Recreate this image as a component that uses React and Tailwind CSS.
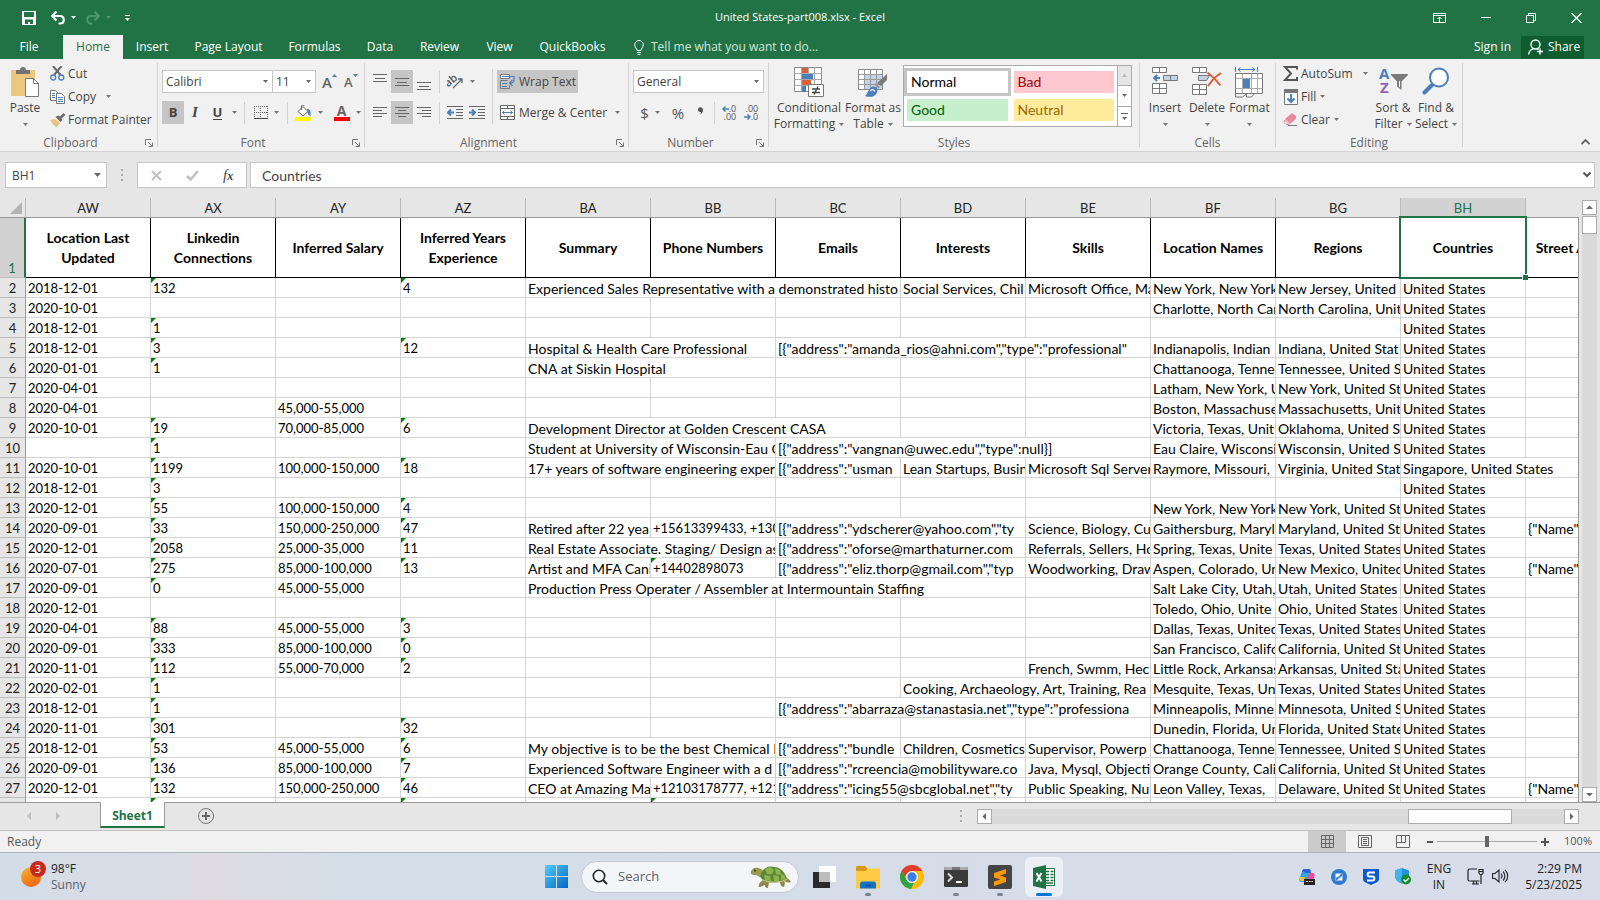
import React from 'react';
import clsx from 'clsx';

const columns = ['AW', 'AX', 'AY', 'AZ', 'BA', 'BB', 'BC', 'BD', 'BE', 'BF', 'BG', 'BH', 'BI'];

const titles = [
  'Location Last Updated', 'Linkedin Connections', 'Inferred Salary', 'Inferred Years Experience',
  'Summary', 'Phone Numbers', 'Emails', 'Interests', 'Skills', 'Location Names', 'Regions',
  'Countries', 'Street Addresses',
];

const US = 'United States';

// A cell is a string, or [string, span] when the text runs over the empty cells next to it
const rows = [
  { AW: '2018-12-01', AX: '132', AZ: '4', BA: ['Experienced Sales Representative with a demonstrated histo', 3], BD: 'Social Services, Chil', BE: 'Microsoft Office, Ma', BF: 'New York, New York', BG: 'New Jersey, United', BH: US },
  { AW: '2020-10-01', BF: 'Charlotte, North Car', BG: 'North Carolina, Unit', BH: US },
  { AW: '2018-12-01', AX: '1', BH: US },
  { AW: '2018-12-01', AX: '3', AZ: '12', BA: ['Hospital & Health Care Professional', 2], BC: ['[{"address":"amanda_rios@ahni.com","type":"professional"', 3], BF: 'Indianapolis, Indian', BG: 'Indiana, United Stat', BH: US },
  { AW: '2020-01-01', AX: '1', BA: ['CNA at Siskin Hospital', 2], BF: 'Chattanooga, Tenne', BG: 'Tennessee, United S', BH: US },
  { AW: '2020-04-01', BF: 'Latham, New York, U', BG: 'New York, United St', BH: US },
  { AW: '2020-04-01', AY: '45,000-55,000', BF: 'Boston, Massachuse', BG: 'Massachusetts, Unit', BH: US },
  { AW: '2020-10-01', AX: '19', AY: '70,000-85,000', AZ: '6', BA: ['Development Director at Golden Crescent CASA', 3], BF: 'Victoria, Texas, Unit', BG: 'Oklahoma, United S', BH: US },
  { AX: '1', BA: ['Student at University of Wisconsin-Eau C', 2], BC: ['[{"address":"vangnan@uwec.edu","type":null}]', 3], BF: 'Eau Claire, Wisconsi', BG: 'Wisconsin, United S', BH: US },
  { AW: '2020-10-01', AX: '1199', AY: '100,000-150,000', AZ: '18', BA: ['17+ years of software engineering exper', 2], BC: '[{"address":"usman', BD: 'Lean Startups, Busin', BE: 'Microsoft Sql Server', BF: 'Raymore, Missouri,', BG: 'Virginia, United Stat', BH: ['Singapore, United States', 2] },
  { AW: '2018-12-01', AX: '3', BH: US },
  { AW: '2020-12-01', AX: '55', AY: '100,000-150,000', AZ: '4', BF: 'New York, New York', BG: 'New York, United St', BH: US },
  { AW: '2020-09-01', AX: '33', AY: '150,000-250,000', AZ: '47', BA: 'Retired after 22 yea', BB: '+15613399433, +1301', BC: ['[{"address":"ydscherer@yahoo.com","ty', 2], BE: 'Science, Biology, Cu', BF: 'Gaithersburg, Maryl', BG: 'Maryland, United St', BH: US, BI: '{"Name"' },
  { AW: '2020-12-01', AX: '2058', AY: '25,000-35,000', AZ: '11', BA: ['Real Estate Associate. Staging/ Design as', 2], BC: ['[{"address":"oforse@marthaturner.com', 2], BE: 'Referrals, Sellers, Ho', BF: 'Spring, Texas, Unite', BG: 'Texas, United States', BH: US },
  { AW: '2020-07-01', AX: '275', AY: '85,000-100,000', AZ: '13', BA: 'Artist and MFA Cani', BB: '+14402898073', BC: ['[{"address":"eliz.thorp@gmail.com","typ', 2], BE: 'Woodworking, Draw', BF: 'Aspen, Colorado, Un', BG: 'New Mexico, United', BH: US, BI: '{"Name"' },
  { AW: '2020-09-01', AX: '0', AY: '45,000-55,000', BA: ['Production Press Operater / Assembler at Intermountain Staffing', 4], BF: 'Salt Lake City, Utah,', BG: 'Utah, United States', BH: US },
  { AW: '2020-12-01', BF: 'Toledo, Ohio, Unite', BG: 'Ohio, United States', BH: US },
  { AW: '2020-04-01', AX: '88', AY: '45,000-55,000', AZ: '3', BF: 'Dallas, Texas, United', BG: 'Texas, United States', BH: US },
  { AW: '2020-09-01', AX: '333', AY: '85,000-100,000', AZ: '0', BF: 'San Francisco, Califo', BG: 'California, United St', BH: US },
  { AW: '2020-11-01', AX: '112', AY: '55,000-70,000', AZ: '2', BE: 'French, Swmm, Hec', BF: 'Little Rock, Arkansas', BG: 'Arkansas, United Sta', BH: US },
  { AW: '2020-02-01', AX: '1', BD: ['Cooking, Archaeology, Art, Training, Rea', 2], BF: 'Mesquite, Texas, Un', BG: 'Texas, United States', BH: US },
  { AW: '2018-12-01', AX: '1', BC: ['[{"address":"abarraza@stanastasia.net","type":"professiona', 3], BF: 'Minneapolis, Minne', BG: 'Minnesota, United S', BH: US },
  { AW: '2020-11-01', AX: '301', AZ: '32', BF: 'Dunedin, Florida, Un', BG: 'Florida, United State', BH: US },
  { AW: '2018-12-01', AX: '53', AY: '45,000-55,000', AZ: '6', BA: ['My objective is to be the best Chemical E', 2], BC: '[{"address":"bundle', BD: 'Children, Cosmetics', BE: 'Supervisor, Powerp', BF: 'Chattanooga, Tenne', BG: 'Tennessee, United S', BH: US },
  { AW: '2020-09-01', AX: '136', AY: '85,000-100,000', AZ: '7', BA: ['Experienced Software Engineer with a d', 2], BC: ['[{"address":"rcreencia@mobilityware.co', 2], BE: 'Java, Mysql, Objecti', BF: 'Orange County, Cali', BG: 'California, United St', BH: US },
  { AW: '2020-12-01', AX: '132', AY: '150,000-250,000', AZ: '46', BA: 'CEO at Amazing Mar', BB: '+12103178777, +1210', BC: ['[{"address":"icing55@sbcglobal.net","ty', 2], BE: 'Public Speaking, Nu', BF: 'Leon Valley, Texas,', BG: 'Delaware, United St', BH: US, BI: '{"Name"' },
  { AX: ' ', AZ: ' ', BB: ' ' },
];

const Caret = ({ className }) => (
  <svg className={clsx('inline-block shrink-0', className)} width="5" height="3" viewBox="0 0 5 3" fill="currentColor">
    <path d="M0 0h5L2.5 3z" />
  </svg>
);

const Icon = ({ w = 16, h = 16, className, children }) => (
  <svg className={clsx('shrink-0', className)} width={w} height={h} viewBox={`0 0 ${w} ${h}`} fill="none">
    {children}
  </svg>
);

/* ---------- title bar and tabs ---------- */

const TitleBar = () => (
  <div className="grid h-[35px] grid-cols-3 items-center text-white">
    <div className="flex items-center pl-[22px]">
      <button aria-label="Save">
        <Icon w={14} h={14}>
          <path d="M0 0h14v14H0z" fill="#fff" />
          <path d="M2 1h10v5H2zM3 8.500h8V13H8v-2H6v2H3z" fill="#217346" />
        </Icon>
      </button>
      <button aria-label="Undo" className="ml-[15px] flex items-center gap-1.5">
        <Icon w={14} h={14}>
          <path d="M1 5h8c5 0 5 7.500 0 7.500H7.500M5.500 .5L1.200 5l4.300 4.500" stroke="#fff" strokeWidth="2.200" />
        </Icon>
        <Caret />
      </button>
      <button aria-label="Redo" className="ml-2.5 flex items-center gap-1.5 text-[#4f9670]">
        <Icon w={14} h={14}>
          <path d="M13 5H5c-5 0-5 7.500 0 7.500h1.500M8.500 .5L12.800 5 8.500 9.500" stroke="currentColor" strokeWidth="2" />
        </Icon>
        <Caret />
      </button>
      <button aria-label="Customize Quick Access Toolbar" className="ml-3.5 flex flex-col gap-0.5">
        <span className="h-px w-[5px] bg-white" />
        <Caret />
      </button>
    </div>
    <div className="text-center text-[11px]">United States-part008.xlsx - Excel</div>
    <div className="flex items-center justify-end gap-[35px] pr-[18px]">
      <button aria-label="Ribbon Display Options">
        <Icon w={13} h={10}>
          <path d="M.5 .5h12v9H.5zM.5 2.500h12M6.500 9V4.500M4.500 6l2-2 2 2" stroke="#fff" />
        </Icon>
      </button>
      <button aria-label="Minimize" className="w-2.5"><span className="block h-px bg-white" /></button>
      <button aria-label="Restore">
        <Icon w={10} h={10}><path d="M.5 2.500h7v7h-7zM2.500 2V.5h7v7H8" stroke="#fff" /></Icon>
      </button>
      <button aria-label="Close">
        <Icon w={11} h={10}><path d="M.5 0l10 10M10.500 0L.5 10" stroke="#fff" strokeWidth="1.200" /></Icon>
      </button>
    </div>
  </div>
);

const tabs = [
  ['Insert', 'w-[58px]'],
  ['Page Layout', 'w-[95px]'],
  ['Formulas', 'w-[77px]'],
  ['Data', 'w-[54px]'],
  ['Review', 'w-[65px]'],
  ['View', 'w-[55px]'],
  ['QuickBooks', 'w-[91px]'],
];

const Tabs = () => (
  <nav className="flex h-6 items-center text-white">
    <button className="w-[58px]">File</button>
    <button className="ml-[5px] h-6 w-[60px] bg-[#f1f1f1] text-[#217346]">Home</button>
    {tabs.map(([name, width]) => (
      <button key={name} className={clsx('whitespace-nowrap text-center', width)}>{name}</button>
    ))}
    <button className="ml-4 flex items-center gap-[7px] text-[#d3e6db]">
      <Icon w={10} h={15}>
        <path d="M3 10.500C3 8.500.7 7.500.7 4.800a4.300 4.300 0 018.600 0C9.300 7.500 7 8.500 7 10.500zM3 12.500h4M3.500 14.500h3" stroke="#fff" />
      </Icon>
      Tell me what you want to do...
    </button>
    <button className="ml-auto">Sign in</button>
    <button className="mr-4 ml-2.5 flex h-[23px] w-[63px] items-center gap-1 bg-[#0e5c2f] pl-[7px]">
      <Icon w={16} h={16}>
        <circle cx="7.500" cy="5.500" r="4.500" stroke="#fff" strokeWidth="1.400" />
        <path d="M.7 15.500c.3-3 2-5 4.300-5.700M9.500 9.500l1 1M12 9.500v6M9 12.500h6" stroke="#fff" strokeWidth="1.400" />
      </Icon>
      Share
    </button>
  </nav>
);

/* ---------- ribbon ---------- */

const Group = ({ label, width, launcher, children }) => (
  <section className={clsx('relative h-[84px] shrink-0 border-r border-[#d2d2d2]', width)}>
    <div className="flex h-[72px]">{children}</div>
    <div className={clsx('h-4 text-center leading-4 text-[#666]', launcher && 'pr-4')}>{label}</div>
    {launcher && (
      <button aria-label={`${label} settings`} className="absolute right-1 bottom-0">
        <Icon w={8} h={8}>
          <path d="M.5 6V.5H6M3 3l4 4M7.500 3.500v4h-4" stroke="#777" />
        </Icon>
      </button>
    )}
  </section>
);

const Big = ({ icon, lines, width }) => (
  <button className={clsx('flex flex-col items-center pt-1 leading-4 whitespace-nowrap', width)}>
    <span className="flex h-[33px] items-start justify-center">{icon}</span>
    <span>{lines[0]}</span>
    <span className="flex h-4 items-center gap-1">
      {lines[1]}
      <Caret className="text-[#777]" />
    </span>
  </button>
);

const Small = ({ icon, text, caret, gap }) => (
  <button className="flex h-[23px] items-center pb-0.5 whitespace-nowrap">
    <span className="flex w-[18px] shrink-0">{icon}</span>
    {text}
    {caret && <Caret className={clsx('text-[#777]', gap || 'ml-1')} />}
  </button>
);

const Tool = ({ label, active, caret, wide, children }) => (
  <button
    aria-label={label}
    className={clsx('flex h-[23px] shrink-0 items-center justify-center', wide || 'w-[22px]', active && 'bg-[#c5c5c5]')}
  >
    {children}
    {caret && <Caret className="ml-1.5 text-[#777]" />}
  </button>
);

const Sep = ({ className }) => <span className={clsx('w-px shrink-0 bg-[#d2d2d2]', className || 'h-[22px]')} />;

const Dropdown = ({ label, value, width }) => (
  <label className={clsx('relative flex h-[23px] items-center', width)}>
    <span className="sr-only">{label}</span>
    <select className="h-full w-full appearance-none border border-[#c6c6c6] bg-white pl-[3px] text-[#444] outline-none" defaultValue={value}>
      <option>{value}</option>
    </select>
    <Caret className="pointer-events-none absolute right-[5px] text-[#666]" />
  </label>
);

const Lines = ({ d }) => (
  <Icon w={14} h={16}><path d={d} stroke="#666" shapeRendering="crispEdges" /></Icon>
);

const Clipboard = () => (
  <Group label="Clipboard" width="w-[158px]" launcher>
    <Big
      width="w-[50px]"
      lines={['Paste']}
      icon={
        <Icon w={28} h={31}>
          <path d="M0 3h24v26H0z" fill="#ecc77f" />
          <path d="M5 7V3h4c0-4 6-4 6 0h4v4z" fill="#737373" />
          <path d="M14.500 11.500h8l5 5v13h-13z" fill="#fff" stroke="#777" />
          <path d="M22.500 11.500v5h5" stroke="#777" />
        </Icon>
      }
    />
    <div className="flex flex-col">
      <Small
        text="Cut"
        icon={
          <Icon w={15} h={15}>
            <path d="M3 0l7.500 9M11.500 0L4 9" stroke="#6a6a6a" strokeWidth="2" />
            <circle cx="3.200" cy="11.500" r="2.500" stroke="#4a7fb8" strokeWidth="1.300" />
            <circle cx="11.300" cy="11.500" r="2.500" stroke="#4a7fb8" strokeWidth="1.300" />
          </Icon>
        }
      />
      <Small
        text="Copy"
        caret
        gap="ml-2.5"
        icon={
          <Icon w={15} h={14}>
            <path d="M.5 .5h5l2.500 2.500v7.500H.5z" fill="#fff" stroke="#777" />
            <path d="M2 3.500h3M2 5.500h3M2 7.500h3" stroke="#4a7fb8" />
            <path d="M6.500 3.500h5l3 3v7h-8z" fill="#fff" stroke="#777" />
            <path d="M8 7.500h5M8 9.500h5M8 11.500h5" stroke="#4a7fb8" />
          </Icon>
        }
      />
      <Small
        text="Format Painter"
        icon={
          <Icon w={16} h={14}>
            <path d="M0 7l5-1 5 4-3 4H5.500L4.500 12H3.500z" fill="#ecc07a" />
            <path d="M5.500 4l5 5 2-2-1-1.500L15.500 2l-2-2L10 3.500 8 2.500z" fill="#6d6d6d" />
          </Icon>
        }
      />
    </div>
  </Group>
);

const FontGroup = () => (
  <Group label="Font" width="w-[207px]" launcher>
    <div className="flex flex-col gap-2 pt-[7px] pl-1">
      <div className="flex items-center">
        <Dropdown label="Font" value="Calibri" width="w-[111px]" />
        <Dropdown label="Font size" value="11" width="-ml-px w-[44px]" />
        <button aria-label="Increase font size" className="ml-1.5 flex w-[22px] items-start text-[15px] leading-4 font-semibold text-[#666]">
          A<svg width="5" height="3" viewBox="0 0 5 3"><path d="M0 3h5L2.500 0z" fill="#4a7fb8" /></svg>
        </button>
        <button aria-label="Decrease font size" className="flex items-start text-[13px] leading-4 font-semibold text-[#666]">
          A<Caret className="text-[#4a7fb8]" />
        </button>
      </div>
      <div className="flex items-center">
        <Tool label="Bold" active><b className="text-[13px]">B</b></Tool>
        <Tool label="Italic"><i className="font-['Liberation_Serif'] text-[15px] font-bold">I</i></Tool>
        <Tool label="Underline" caret wide="w-[38px] gap-1"><span className="border-b border-[#444] text-[13px] leading-[14px] font-bold">U</span></Tool>
        <Sep />
        <Tool label="Borders" caret wide="w-[42px]">
          <Icon w={14} h={14}>
            <path d="M.5 0v13M13.500 0v13M6.500 0v13M0 .5h14M0 6.500h14" stroke="#666" strokeDasharray="1 1" />
            <path d="M0 12.500h14" stroke="#444" />
          </Icon>
        </Tool>
        <Sep />
        <Tool label="Fill color" caret wide="w-[42px]">
          <Icon w={17} h={16}>
            <path d="M8 1.500l5 5-5 4.500-5-4.500zM6.500 5V1c0-1.500 2.500-1.500 2.500 0" fill="#f8f8f8" stroke="#666" />
            <path d="M12 4c3 0 4 2 3.500 7-2-1-3-2-3-4z" fill="#4a7fb8" />
            <path d="M0 12h16v4H0z" fill="#ff0" />
          </Icon>
        </Tool>
        <Tool label="Font color" caret wide="w-[34px]">
          <span className="w-4 border-b-4 border-[#f00] text-[14px] leading-[12px] font-bold text-[#666]">A</span>
        </Tool>
      </div>
    </div>
  </Group>
);

const Alignment = () => (
  <Group label="Alignment" width="w-[264px]" launcher>
    <div className="flex flex-col gap-2 pt-[7px] pl-1">
      <div className="flex items-center">
        <Tool label="Top align"><Lines d="M0 .5h14M2 4.500h10M0 7.500h14" /></Tool>
        <Tool label="Middle align" active><Lines d="M0 4.500h14M2 8.500h10M0 11.500h14" /></Tool>
        <Tool label="Bottom align"><Lines d="M0 8.500h14M2 12.500h10M0 15.500h14" /></Tool>
        <Sep className="ml-1 h-[22px]" />
        <Tool label="Orientation" caret wide="ml-1.5 w-[30px]">
          <Icon w={17} h={15}>
            <text x="-1" y="10" transform="rotate(-40 5 9)" fontSize="11" fontWeight="600" fontFamily="Open Sans" fill="#555">ab</text>
            <path d="M6 14L14.500 5.500M11 5h4v4" stroke="#666" strokeWidth="1.300" />
          </Icon>
        </Tool>
      </div>
      <div className="flex items-center">
        <Tool label="Align left"><Lines d="M0 2.500h14M0 5.500h9M0 8.500h14M0 11.500h9" /></Tool>
        <Tool label="Center" active><Lines d="M0 2.500h14M3 5.500h8M0 8.500h14M3 11.500h8" /></Tool>
        <Tool label="Align right"><Lines d="M0 2.500h14M5 5.500h9M0 8.500h14M5 11.500h9" /></Tool>
        <Sep className="ml-1 h-[22px]" />
        <Tool label="Decrease indent" wide="ml-1 w-[22px]">
          <Icon w={16} h={14}>
            <path d="M0 .5h16M9 3.500h7M9 6.500h7M9 9.500h7M0 12.500h16" stroke="#666" shapeRendering="crispEdges" />
            <path d="M7 6.500H1.500M4 3.500l-3 3 3 3" stroke="#4a7fb8" strokeWidth="2" />
          </Icon>
        </Tool>
        <Tool label="Increase indent">
          <Icon w={16} h={14}>
            <path d="M0 .5h16M9 3.500h7M9 6.500h7M9 9.500h7M0 12.500h16" stroke="#666" shapeRendering="crispEdges" />
            <path d="M0 6.500h5.500M3 3.500l3 3-3 3" stroke="#4a7fb8" strokeWidth="2" />
          </Icon>
        </Tool>
      </div>
    </div>
    <Sep className="mt-1.5 ml-1 h-[55px]" />
    <div className="flex flex-col items-start gap-2 pt-[7px] pl-1">
      <button className="flex h-[23px] w-[81px] items-center gap-1 bg-[#c5c5c5] pl-[3px] whitespace-nowrap">
        <Icon w={15} h={15}>
          <path d="M.5 .5h9v4h-9z" fill="#fff" stroke="#777" />
          <path d="M2 2.500h12v4c0 2-1 2.500-4 2.500M12.500 6L9.500 9l3 3" stroke="#4a7fb8" strokeWidth="1.200" />
          <path d="M.5 6.500v8h9v-3M.5 6.500h7" stroke="#777" />
          <path d="M2 9.500h5M2 12.500h5" stroke="#4a7fb8" />
        </Icon>
        Wrap Text
      </button>
      <button className="flex h-[23px] items-center gap-1 pl-[3px] whitespace-nowrap">
        <Icon w={15} h={15}>
          <path d="M.5 .5h14v14H.5z" fill="#fff" stroke="#666" />
          <path d="M.5 3.500h14M.5 11.500h14M7.500 0v3.500M7.500 11.500V15" stroke="#666" />
          <path d="M2.500 7.500h10M4.500 5.500l-2 2 2 2M10.500 5.500l2 2-2 2" stroke="#4a7fb8" />
        </Icon>
        Merge &amp; Center
        <Caret className="ml-1 text-[#777]" />
      </button>
    </div>
  </Group>
);

const NumberGroup = () => (
  <Group label="Number" width="w-[140px]" launcher>
    <div className="flex flex-col gap-2 pt-[7px] pl-1">
      <Dropdown label="Number format" value="General" width="w-[131px]" />
      <div className="flex items-center text-[#555]">
        <Tool label="Accounting format" caret wide="w-[34px]"><span className="text-[15px]">$</span></Tool>
        <Tool label="Percent style"><span className="text-[15px]">%</span></Tool>
        <Tool label="Comma style">
          <Icon w={7} h={12}><path d="M1 2.500C1-.5 6-.5 6 3c0 2.500-1.500 4-3.500 4.500C4 6.500 4 6 4 5 2.500 5.500 1 4.500 1 2.500z" fill="#555" /></Icon>
        </Tool>
        <Sep className="mx-[3px] h-[22px]" />
        <Tool label="Increase decimal">
          <span className="flex flex-col items-end text-[9px] leading-[8px]">
            <span className="flex items-center">
              <Icon w={7} h={6}><path d="M7 3H1.500M3.500 .5L1 3l2.500 2.500" stroke="#4a7fb8" strokeWidth="1.500" /></Icon>.0
            </span>
            .00
          </span>
        </Tool>
        <Tool label="Decrease decimal">
          <span className="flex flex-col items-end text-[9px] leading-[8px]">
            .00
            <span className="flex items-center">
              <Icon w={7} h={6}><path d="M0 3h5.500M3.500 .5L6 3 3.500 5.500" stroke="#4a7fb8" strokeWidth="1.500" /></Icon>.0
            </span>
          </span>
        </Tool>
      </div>
    </div>
  </Group>
);

const styleCells = [
  ['Normal', 'bg-white text-black outline-3 outline-[#c5c5c5]'],
  ['Bad', 'bg-[#ffc7ce] text-[#9c0006]'],
  ['Good', 'bg-[#c6efce] text-[#006100]'],
  ['Neutral', 'bg-[#ffeb9c] text-[#9c6500]'],
];

const Styles = () => (
  <Group label="Styles" width="w-[371px]">
    <Big
      width="w-[78px] pl-0.5"
      lines={['Conditional', 'Formatting']}
      icon={
        <Icon w={30} h={31}>
          <path d="M.5 .5h27v24H.5z" fill="#fff" stroke="#888" />
          <path d="M.5 6.500h27M.5 12.500h27M.5 18.500h27M7.500 .5v24M14.500 .5v24M20.500 .5v24" stroke="#aaa" />
          <path d="M8 1h6v5H8zM8 13h9v5H8z" fill="#d9603b" />
          <path d="M8 7h11v5H8zM8 19h4v6H8z" fill="#4a7fb8" />
          <path d="M14.500 17.500h15v12h-15z" fill="#fff" stroke="#777" />
          <path d="M18 22h8M18 25.500h8M24 19.500l-4 8" stroke="#444" strokeWidth="1.300" />
        </Icon>
      }
    />
    <Big
      width="w-[52px]"
      lines={['Format as', 'Table']}
      icon={
        <Icon w={30} h={31}>
          <path d="M.5 2.500h24v20H.5z" fill="#fff" stroke="#888" />
          <path d="M7 8h17v14H7z" fill="#c2d3ea" />
          <path d="M.5 7.500h24M.5 12.500h24M.5 17.500h24M6.500 2.500v20M12.500 2.500v20M18.500 2.500v20" stroke="#999" />
          <path d="M29 7v6l-6 6-4-3z" fill="#7a7a7a" />
          <path d="M18 16l4 4-1.500 1.500-4-4z" fill="#999" />
          <path d="M7 29c3-2 3-8 8-9.500 4 0 5 3 4 6-2 5-8 5-12 3.500z" fill="#4a7fb8" />
          <path d="M12.500 24c1-2 4-2 4 .5" stroke="#fff" strokeWidth="1.300" />
        </Icon>
      }
    />
    <div className="mt-0.5 ml-1 flex h-[62px] w-[229px] border border-[#ababab] bg-white font-[Lato,sans-serif] text-sm">
      <div className="grid flex-1 grid-cols-2 content-start gap-x-1.5 gap-y-1.5 px-[3px] py-[5px]">
        {styleCells.map(([name, look]) => (
          <button key={name} className={clsx('h-[22px] pl-1 text-left leading-[20px]', look)}>{name}</button>
        ))}
      </div>
      <div className="flex w-[14px] flex-col border-l border-[#ababab] text-[#666]">
        <button aria-label="Styles up" className="flex flex-1 items-center justify-center bg-[#e6e6e6] text-[#b5b5b5]"><Caret className="rotate-180" /></button>
        <button aria-label="Styles down" className="flex flex-1 items-center justify-center border-y border-[#ababab]"><Caret /></button>
        <button aria-label="More styles" className="flex flex-1 flex-col items-center justify-center gap-[3px]">
          <span className="h-px w-[7px] bg-[#666]" />
          <Caret />
        </button>
      </div>
    </div>
  </Group>
);

const Cells = () => (
  <Group label="Cells" width="w-[136px]">
    <Big
      width="ml-1 w-[42px]"
      lines={['Insert']}
      icon={
        <Icon w={27} h={29}>
          <path d="M.5 .5h14v5H.5zM7.500 .5v5M.5 16.500h14v10H.5zM7.500 16.500v10M.5 21.500h14" fill="#fff" stroke="#777" />
          <path d="M11.500 8.500h14v5h-14zM18.500 8.500v5" fill="#c2d3ea" stroke="#777" />
          <path d="M8 11H2M5 8l-3 3 3 3" stroke="#4a7fb8" strokeWidth="1.800" />
        </Icon>
      }
    />
    <Big
      width="w-[42px]"
      lines={['Delete']}
      icon={
        <Icon w={30} h={29}>
          <path d="M.5 .5h14v5H.5zM7.500 .5v5M.5 17.500h14v10H.5zM7.500 17.500v10M.5 22.500h14" fill="#fff" stroke="#777" />
          <path d="M6.500 8.500h11l-3 5h-8z" fill="#c2d3ea" stroke="#777" />
          <path d="M15.500 5.500c4 3 9 8 13 13M29 6c-5 3-9 7-13 13" stroke="#d9603b" strokeWidth="2" />
        </Icon>
      }
    />
    <Big
      width="w-[43px]"
      lines={['Format']}
      icon={
        <Icon w={29} h={31}>
          <path d="M.5 6.500h27v20H.5z" fill="#fff" stroke="#777" />
          <path d="M.5 11.500h27M.5 21.500h27M7.500 6.500v20M16.500 6.500v20M22.500 6.500v20" stroke="#aaa" />
          <path d="M8 12h7v9H8z" fill="#4a7fb8" />
          <path d="M.5 26v4h7l4-3v3h5l3-3.500" stroke="#777" />
          <path d="M.5 0v5M22.500 0v5M3 2.500h17M5.500 .5l-2.500 2 2.500 2M17.500 .5l2.500 2-2.500 2" stroke="#4a7fb8" />
        </Icon>
      }
    />
  </Group>
);

const Editing = () => (
  <Group label="Editing" width="w-[187px]">
    <div className="flex w-[94px] flex-col pl-[7px]">
      <Small
        text="AutoSum"
        caret
        gap="ml-2.5"
        icon={<Icon w={15} h={15}><path d="M14 3.500V1H2l6 6.500L2 14h12v-3" stroke="#555" strokeWidth="2" /></Icon>}
      />
      <Small
        text="Fill"
        caret
        icon={
          <Icon w={15} h={16}>
            <path d="M1.500 .5h13v15h-13z" fill="#fff" stroke="#777" />
            <path d="M1 0h14v4H1z" fill="#777" />
            <path d="M8 5v8M4.500 9.500L8 13l3.500-3.500" stroke="#4a7fb8" strokeWidth="2" />
          </Icon>
        }
      />
      <Small
        text="Clear"
        caret
        icon={
          <Icon w={15} h={14}>
            <path d="M9 0l4 3v3L7 11 2 6z" fill="#e98a9c" />
            <path d="M1.500 7l4.500 4.500H3L1 9.500z" fill="#fff" stroke="#e98a9c" />
            <path d="M5 12.500h9" stroke="#777" />
          </Icon>
        }
      />
    </div>
    <Big
      width="w-[46px]"
      lines={['Sort &', 'Filter']}
      icon={
        <Icon w={29} h={28}>
          <text x="0" y="12" fontSize="15" fontWeight="700" fontFamily="Open Sans" fill="#4a7fb8">A</text>
          <text x="1" y="26" fontSize="15" fontWeight="700" fontFamily="Open Sans" fill="#9064b8">Z</text>
          <path d="M12 7h17v1l-6.500 6.500V23L18 19.500v-5L12 8z" fill="#7a7a7a" />
          <path d="M20.500 14v6" stroke="#fff" />
        </Icon>
      }
    />
    <Big
      width="w-[40px]"
      lines={['Find &', 'Select']}
      icon={
        <Icon w={28} h={28}>
          <path d="M10.500 17.500L2.500 25.500" stroke="#4a7fb8" strokeWidth="4" strokeLinecap="round" />
          <circle cx="17" cy="10.500" r="9" fill="#fff" stroke="#4a7fb8" strokeWidth="2" />
        </Icon>
      }
    />
  </Group>
);

const Ribbon = () => (
  <div className="relative flex h-[93px] border-b border-[#d2d2d2] bg-[#f1f1f1] pt-1 text-[#444]">
    <Clipboard />
    <FontGroup />
    <Alignment />
    <NumberGroup />
    <Styles />
    <Cells />
    <Editing />
    <button aria-label="Collapse the ribbon" className="mt-auto mr-2.5 mb-1.5 ml-auto">
      <Icon w={9} h={6}><path d="M.5 5l4-4 4 4" stroke="#666" strokeWidth="1.800" /></Icon>
    </button>
  </div>
);

/* ---------- formula bar ---------- */

const Dots = () => (
  <span className="flex flex-col gap-[3px]">
    <span className="h-0.5 w-0.5 bg-[#ababab]" />
    <span className="h-0.5 w-0.5 bg-[#ababab]" />
    <span className="h-0.5 w-0.5 bg-[#ababab]" />
  </span>
);

const FormulaBar = () => (
  <div className="flex h-[46px] items-start bg-[#e6e6e6] px-[5px] pt-2.5 text-[#444]">
    <label className="relative flex h-[26px] w-[102px] items-center">
      <span className="sr-only">Name box</span>
      <input className="h-full w-full border border-[#c6c6c6] bg-white pl-1.5 outline-none" defaultValue="BH1" />
      <svg className="absolute right-[6px]" width="7" height="4" viewBox="0 0 7 4"><path d="M0 0h7L3.500 4z" fill="#666" /></svg>
    </label>
    <span className="flex h-[26px] w-[30px] items-center justify-center"><Dots /></span>
    <div className="flex h-[26px] w-[110px] items-center gap-6 border border-[#c6c6c6] bg-white pl-[13px]">
      <button aria-label="Cancel"><Icon w={11} h={11}><path d="M1 1l9 9M10 1l-9 9" stroke="#c0c0c0" strokeWidth="2" /></Icon></button>
      <button aria-label="Enter"><Icon w={13} h={11}><path d="M1 6l3.500 3.500L12 1" stroke="#c0c0c0" strokeWidth="2.500" /></Icon></button>
      <button aria-label="Insert function" className="flex items-baseline font-['Liberation_Serif'] text-[15px] leading-4 text-[#444] italic">f<span className="text-[12px] font-bold">x</span></button>
    </div>
    <label className="relative ml-[3px] flex h-[26px] flex-1 items-center">
      <span className="sr-only">Formula</span>
      <input className="h-full w-full border border-[#c6c6c6] bg-white pl-[11px] font-[Lato,sans-serif] text-sm outline-none" defaultValue="Countries" />
      <Icon w={8} h={6} className="absolute right-[4px]"><path d="M.5 .5l3.500 3.500L7.500 .5" stroke="#555" strokeWidth="2" /></Icon>
    </label>
  </div>
);

/* ---------- sheet ---------- */

const flagged = ['AX', 'AZ', 'BB'];
const numeric = ['AW', 'AX', 'AY', 'AZ', 'BB'];

const Row = ({ number, row }) => {
  const cells = [];
  for (let i = 0; i < columns.length;) {
    const col = columns[i];
    const [text, span] = Array.isArray(row[col]) ? row[col] : [row[col], 1];
    const flag = text && flagged.includes(col) && !text.includes(', ');
    cells.push(
      <td
        key={col}
        colSpan={span}
        className={clsx(
          'relative h-5 overflow-hidden border-r border-b border-[#d4d4d4] pt-0.5 pl-0.5 leading-[17px] whitespace-nowrap',
          numeric.includes(col) ? 'text-[13px]' : 'text-sm/[17px]'
        )}
      >
        {flag && <span className="absolute top-0 left-0 border-t-5 border-r-5 border-t-[#008000] border-r-transparent" />}
        {text}
      </td>
    );
    i += span;
  }
  return (
    <tr>
      <th scope="row" className="h-5 border-r border-b border-r-[#999] border-b-[#bbb] bg-[#e6e6e6] pt-0.5 text-center leading-[17px] font-normal text-[#222]">
        {number}
      </th>
      {cells}
    </tr>
  );
};

const Sheet = () => (
  <div className="relative min-w-0 flex-1 overflow-hidden bg-white">
    <table className="w-[1651px] table-fixed border-separate border-spacing-0 font-[Lato,sans-serif] text-[13px] text-black">
      <colgroup>
        <col className="w-[26px]" />
        {columns.map((col) => <col key={col} className="w-[125px]" />)}
      </colgroup>
      <thead>
        <tr className="bg-[#e6e6e6] text-[#222]">
          <th className="h-5 border-r border-b border-r-[#bbb] border-b-[#999]">
            <Icon w={12} h={12} className="ml-2.5"><path d="M12 0v12H0z" fill="#b4b4b4" /></Icon>
          </th>
          {columns.map((col) => (
            <th
              key={col}
              scope="col"
              className={clsx('h-5 border-r border-b border-r-[#bbb] border-b-[#999] pt-0.5 leading-[17px] font-normal', col === 'BH' && 'bg-[#d2d2d2] text-[#217346]')}
            >
              {col !== 'BI' && col}
            </th>
          ))}
        </tr>
      </thead>
      <tbody>
        <tr>
          <th scope="row" className="h-[60px] border-r-2 border-b border-r-[#217346] border-b-[#bbb] bg-[#d2d2d2] text-center align-bottom leading-[17px] font-normal text-[#217346]">
            1
          </th>
          {titles.map((title) => (
            <td key={title} className="relative h-[60px] border-r border-b border-black px-1 text-center text-sm/5 font-bold">
              {title}
              {title === 'Countries' && (
                <span className="absolute -top-0.5 -right-0.5 -bottom-0.5 -left-0.5 z-10 border-2 border-[#217346]">
                  <span className="absolute -right-[3px] -bottom-[3px] h-1.5 w-1.5 border-t border-l border-white bg-[#217346]" />
                </span>
              )}
            </td>
          ))}
        </tr>
        {rows.map((row, index) => <Row key={index} number={index + 2} row={row} />)}
      </tbody>
    </table>
    <div className="absolute top-[19px] right-0 bottom-0 w-px bg-[#999]" />
  </div>
);

const ScrollButton = ({ label, d }) => (
  <button aria-label={label} className="flex h-[15px] w-[15px] shrink-0 items-center justify-center border border-[#ababab] bg-white">
    <svg width="7" height="7" viewBox="0 0 7 7"><path d={d} fill="#666" /></svg>
  </button>
);

const SheetBar = () => (
  <div className="flex h-7 items-start border-t border-[#999] bg-[#e6e6e6]">
    <div className="flex h-[26px] w-[100px] items-center gap-6 pl-[27px]">
      <button aria-label="Previous sheet"><Icon w={5} h={8}><path d="M4 0v8L0 4z" fill="#bdbdbd" /></Icon></button>
      <button aria-label="Next sheet"><Icon w={5} h={8}><path d="M0 0v8l4-4z" fill="#bdbdbd" /></Icon></button>
    </div>
    <button className="-mt-px h-[26px] w-[65px] border-x border-b-2 border-x-[#999] border-b-[#217346] bg-white pt-[3px] font-bold text-[#217346]">
      Sheet1
    </button>
    <button aria-label="New sheet" className="mt-[5px] ml-[33px]">
      <Icon w={16} h={16}>
        <circle cx="8" cy="8" r="7.500" stroke="#777" />
        <path d="M8 4v8M4 8h8" stroke="#666" strokeWidth="2" />
      </Icon>
    </button>
    <div className="ml-auto flex h-[26px] w-[640px] items-center">
      <Dots />
      <div className="ml-[15px] flex flex-1 items-center bg-[#dadada]">
        <ScrollButton label="Scroll left" d="M5 0v7L1.500 3.500z" />
        <div className="flex flex-1 justify-end pr-[52px]"><div className="h-[15px] w-[104px] border border-[#ababab] bg-white" /></div>
        <ScrollButton label="Scroll right" d="M2 0v7l3.500-3.500z" />
      </div>
      <span className="w-[21px]" />
    </div>
  </div>
);

const StatusBar = () => (
  <div className="flex h-[22px] items-center border-t border-[#c0c0c0] bg-[#f1f1f1] text-[#555]">
    <span className="pl-[7px]">Ready</span>
    <button aria-label="Normal view" className="ml-auto flex h-[21px] w-[38px] items-center justify-center bg-[#cacaca]">
      <Icon w={13} h={13}><path d="M.5 .5h12v12H.5zM4.500 .5v12M8.500 .5v12M.5 4.500h12M.5 8.500h12" stroke="#666" /></Icon>
    </button>
    <button aria-label="Page layout view" className="flex w-[38px] justify-center">
      <Icon w={14} h={13}><path d="M.5 .5h13v12H.5zM3.500 2.500h7v8h-7zM5 4.500h4M5 6.500h4M5 8.500h4" stroke="#666" /></Icon>
    </button>
    <button aria-label="Page break preview" className="flex w-[38px] justify-center">
      <Icon w={14} h={13}><path d="M.5 .5h13v12H.5zM.5 7.500h9M5.500 .5v7M9.500 .5v7" stroke="#666" /></Icon>
    </button>
    <button aria-label="Zoom out" className="ml-[5px] h-0.5 w-1.5 bg-[#555]" />
    <input
      type="range"
      aria-label="Zoom"
      defaultValue="50"
      className="mx-1 h-3 w-[100px] appearance-none bg-transparent bg-[linear-gradient(#aaa,#aaa)] bg-[length:100%_1px] bg-center bg-no-repeat [&::-webkit-slider-thumb]:h-[11px] [&::-webkit-slider-thumb]:w-1 [&::-webkit-slider-thumb]:appearance-none [&::-webkit-slider-thumb]:bg-[#666]"
    />
    <button aria-label="Zoom in"><Icon w={8} h={8}><path d="M4 0v8M0 4h8" stroke="#555" strokeWidth="2" /></Icon></button>
    <span className="w-[51px] pr-2 text-right text-[11px]">100%</span>
  </div>
);

/* ---------- taskbar ---------- */

const Turtle = () => (
  <Icon w={42} h={24}>
    <path d="M13 15c-3 2-5 5-4 7 3 0 6-2 8-5zM15 17c-1 3 0 6 3 6l1-6zM30 16c0 3 1 6 4 6l1-4-2-4zM35 12c3 1 5 3 6 5-2 1-5 0-7-1z" fill="#8a8a4a" />
    <path d="M1 9c-1-4 3-7 7-6 3 0 5 3 7 6l-2 4C9 13 8 10 6 10s-4 0-5-1z" fill="#9a9a52" />
    <circle cx="5" cy="5.500" r=".9" fill="#2c2c14" />
    <path d="M11 9C13 3 18 0 25 2c7 1 10 6 12 12-5 4-20 5-24 1-2-1-3-4-2-6z" fill="#5c8a34" />
    <path d="M15 4l5-2 4 3-2 4-5 0zM25 3l5 2 1 5-5-1zM14 10l6 1 1 5-6-1zM23 10l6 1v5l-5 0zM31 9l3 1 2 4-5 1z" fill="#8db54e" />
    <path d="M13 15c6 3 18 3 24-1" stroke="#c5c07a" strokeWidth="1.200" />
  </Icon>
);

const taskbarApps = [
  {
    name: 'Task view',
    icon: (
      <Icon w={24} h={24}>
        <path d="M1 7h17v16H1z" fill="#2a2a2a" />
        <path d="M7 1h17v16H7z" fill="#fff" fillOpacity=".92" />
        <path d="M7 7h11v10H7z" fill="#bdbdbd" />
      </Icon>
    ),
  },
  {
    name: 'File Explorer',
    open: true,
    icon: (
      <Icon w={24} h={24}>
        <path d="M0 2.500C0 1.500.7 1 1.500 1H9l2.500 2.500V8H0z" fill="#d99a12" />
        <path d="M0 6l9.500 0L12 3.500h10.500c1 0 1.500.5 1.500 1.500v17c0 1-.5 1.500-1.500 1.500h-21C.5 23.500 0 23 0 22z" fill="#ffcb45" />
        <path d="M4 23.500V19c0-1.500 1-2.500 2.500-2.500h11c1.500 0 2.500 1 2.500 2.500v4.500z" fill="#1173c7" />
        <path d="M9 20.500h6" stroke="#0b4f94" strokeWidth="1.500" />
      </Icon>
    ),
  },
  {
    name: 'Google Chrome',
    icon: (
      <Icon w={24} h={24}>
        <circle cx="12" cy="12" r="12" fill="#fbbc05" />
        <path d="M1.600 6A12 12 0 0122.400 6H12a6 6 0 00-5.500 3.500L5 12z" fill="#e33b2e" />
        <path d="M1.600 6L6.800 15A6 6 0 0014 17.700L11 24A12 12 0 011.600 6z" fill="#2ba24c" />
        <circle cx="12" cy="12" r="6" fill="#fff" />
        <circle cx="12" cy="12" r="4.700" fill="#3b7ded" />
      </Icon>
    ),
  },
  {
    name: 'Terminal',
    open: true,
    icon: (
      <Icon w={24} h={20}>
        <rect width="24" height="20" rx="1.500" fill="#3a3a3a" />
        <path d="M1.500 0h21c1 0 1.500.5 1.500 1.500V3H0V1.500C0 .5.500 0 1.500 0z" fill="#aaa" />
        <path d="M8 0h8v3H8z" fill="#777" />
        <path d="M4 6.500l4 4-4 4" stroke="#ddd" strokeWidth="2" />
        <path d="M12 15h6" stroke="#fff" strokeWidth="2" />
      </Icon>
    ),
  },
  {
    name: 'Sublime Text',
    open: true,
    icon: (
      <Icon w={24} h={24}>
        <rect width="24" height="24" rx="2" fill="#454545" />
        <path d="M18 4v4.500l-6 2 6 2V17L6 21v-4.500l6.500-2-6.500-2V8z" fill="#ff9800" />
      </Icon>
    ),
  },
  {
    name: 'Excel',
    active: true,
    icon: (
      <Icon w={24} h={24}>
        <path d="M12 3.500h10.500v17H12z" fill="#fff" stroke="#217346" />
        <path d="M14 6.500h3M18.500 6.500h3M14 9.500h3M18.500 9.500h3M14 12.500h3M18.500 12.500h3M14 15.500h3M18.500 15.500h3M14 18h7" stroke="#217346" strokeWidth="1.500" />
        <path d="M1 3l13-3v24L1 21z" fill="#217346" />
        <path d="M4.500 8l5 8.500M9.500 8l-5 8.500" stroke="#fff" strokeWidth="2" />
      </Icon>
    ),
  },
];

const Taskbar = () => (
  <footer className="grid h-12 grid-cols-[1fr_auto_1fr] items-center border-t border-[#a9b1bb] bg-[linear-gradient(90deg,#d3dde7_0%,#d8dce6_10%,#dfdbe3_13%,#d3dee8_22%,#d5dce8_60%,#d8dde9_100%)] text-[#222]">
    <button className="flex items-center gap-[5px] pl-5 text-left">
      <Icon w={26} h={32}>
        <defs>
          <linearGradient id="sun" x1="0" y1="0" x2=".5" y2="1">
            <stop stopColor="#f5b82e" />
            <stop offset="1" stopColor="#f0690f" />
          </linearGradient>
        </defs>
        <circle cx="11" cy="16" r="10" fill="url(#sun)" />
        <circle cx="18" cy="8" r="8" fill="#c42b1c" />
        <text x="18" y="12" textAnchor="middle" fontSize="11" fontFamily="Open Sans" fill="#fff">3</text>
      </Icon>
      <span className="leading-4">98°F<br /><span className="text-[#5a6068]">Sunny</span></span>
    </button>
    <div className="flex items-center">
      <button aria-label="Start" className="flex w-11 justify-center">
        <Icon w={23} h={23}>
          <defs>
            <linearGradient id="win" x1="0" y1="0" x2="1" y2="1">
              <stop stopColor="#52cdf8" />
              <stop offset="1" stopColor="#0067c5" />
            </linearGradient>
          </defs>
          <path d="M0 0h11v11H0zM12 0h11v11H12zM0 12h11v11H0zM12 12h11v11H12z" fill="url(#win)" />
        </Icon>
      </button>
      <label className="mx-[3px] flex h-8 w-[218px] items-center rounded-full border border-[#c3cad6] bg-[#f3f5f9] pr-1.5 pl-2.5">
        <Icon w={16} h={16}>
          <circle cx="7" cy="7" r="5.700" stroke="#222" strokeWidth="1.600" />
          <path d="M11 11l4 4" stroke="#222" strokeWidth="2" />
        </Icon>
        <input aria-label="Search" placeholder="Search" className="ml-2.5 w-full min-w-0 bg-transparent text-[13px] outline-none placeholder:text-[#5d6167]" />
        <Turtle />
      </label>
      {taskbarApps.map((app) => (
        <button key={app.name} aria-label={app.name} className="relative flex h-10 w-11 items-center justify-center">
          {app.active && <span className="absolute inset-x-[3px] inset-y-0 rounded-md bg-white/55" />}
          <span className="relative">{app.icon}</span>
          {app.open && <span className="absolute bottom-px h-[3px] w-1.5 rounded-full bg-[#7d828a]" />}
          {app.active && <span className="absolute bottom-px h-[3px] w-4 rounded-full bg-[#0078d4]" />}
        </button>
      ))}
    </div>
    <div className="flex items-center justify-end gap-4 pr-[18px] leading-4 whitespace-nowrap">
      <Icon w={16} h={16}>
        <path d="M5 0h5c1.500 0 1.500 1 1 3L9 10c-.5 2-1 3-3 3H3c-3 0-3-2-2-5l2-5.500C3.500 1 4 0 5 0z" fill="#2fa5e8" />
        <path d="M5 0h5c1.500 0 1.500 1 2 4H7L3 2.500C3.500 1 4 0 5 0z" fill="#2c62d6" />
        <path d="M1 8h5l-1 4H3C.5 12 .5 10 1 8z" fill="#f5c542" />
        <path d="M10 4h3c3 0 3 2 2 5l-1 3H8z" fill="#ef4f9a" />
        <path d="M5 10h11v6H5z" fill="#222" />
        <path d="M7 12.500h7" stroke="#ddd" strokeDasharray="2 .7" />
      </Icon>
      <Icon w={16} h={16}>
        <circle cx="8" cy="8" r="8" fill="#2f7bd0" />
        <path d="M4.500 4.500h7v7h-7z" fill="#fff" />
        <path d="M4.500 9l3-.5 4-4M5 11l6-5" stroke="#2f7bd0" strokeWidth="1.200" />
      </Icon>
      <Icon w={16} h={16}>
        <path d="M0 0h16v10c0 3-4 4-8 6-4-2-8-3-8-6z" fill="#0a5bd3" />
        <path d="M12 3.500H6.500c-2.500 0-2.500 4 0 4h3c2.500 0 2.500 4 0 4H4" stroke="#fff" strokeWidth="2" />
      </Icon>
      <Icon w={16} h={17}>
        <path d="M7 0l7 2.500V8c0 4-3 6-7 7.500C3 14 0 12 0 8V2.500z" fill="#2193dc" />
        <path d="M7 0v15.500C3 14 0 12 0 8V2.500z" fill="#42b5ef" />
        <circle cx="11" cy="11.500" r="5" fill="#0f8a2c" />
        <path d="M8.500 11.500l2 2 3.500-3.500" stroke="#fff" strokeWidth="1.400" />
      </Icon>
      <button className="text-center">ENG<br />IN</button>
      <button aria-label="Network and volume" className="flex gap-2">
        <Icon w={17} h={17}>
          <path d="M10 1H2.500C1.500 1 1 1.500 1 2.500v9c0 1 .5 1.500 1.500 1.500h10M5 16h7M6.500 13v3M9.500 13v3" stroke="#222" strokeWidth="1.200" />
          <path d="M12 1.500h4v3.500c0 1-.5 1.500-2 1.500s-2-.5-2-1.500zM14 6.500V16M12 3.500h4" stroke="#222" strokeWidth="1.200" />
        </Icon>
        <Icon w={17} h={16}>
          <path d="M.6 5.500h2.500L7 2v12l-3.900-3.500H.6z" stroke="#222" strokeWidth="1.100" />
          <path d="M9 5.500c1.300 1.500 1.300 3.500 0 5M11 3.500c2.500 2.500 2.500 6.500 0 9M13 1.800c3.600 3.500 3.600 9 0 12.400" stroke="#222" strokeWidth="1.100" />
        </Icon>
      </button>
      <button className="text-right">2:29 PM<br />5/23/2025</button>
    </div>
  </footer>
);

const App = () => (
  <div className="flex h-screen flex-col overflow-hidden font-['Open_Sans','Noto_Sans',sans-serif] text-xs">
    <header className="bg-[#217346]">
      <TitleBar />
      <Tabs />
    </header>
    <Ribbon />
    <FormulaBar />
    <main className="flex min-h-0 flex-1 bg-[#e6e6e6]">
      <Sheet />
      <div className="flex w-[21px] flex-col pt-0.5 pl-[3px]">
        <ScrollButton label="Scroll up" d="M0 5h7L3.500 1.500z" />
        <div className="w-[15px] flex-1 bg-[#dadada] pt-px"><div className="h-[18px] border border-[#ababab] bg-white" /></div>
        <ScrollButton label="Scroll down" d="M0 2h7L3.500 5.500z" />
      </div>
    </main>
    <SheetBar />
    <StatusBar />
    <Taskbar />
  </div>
);

export default App;
